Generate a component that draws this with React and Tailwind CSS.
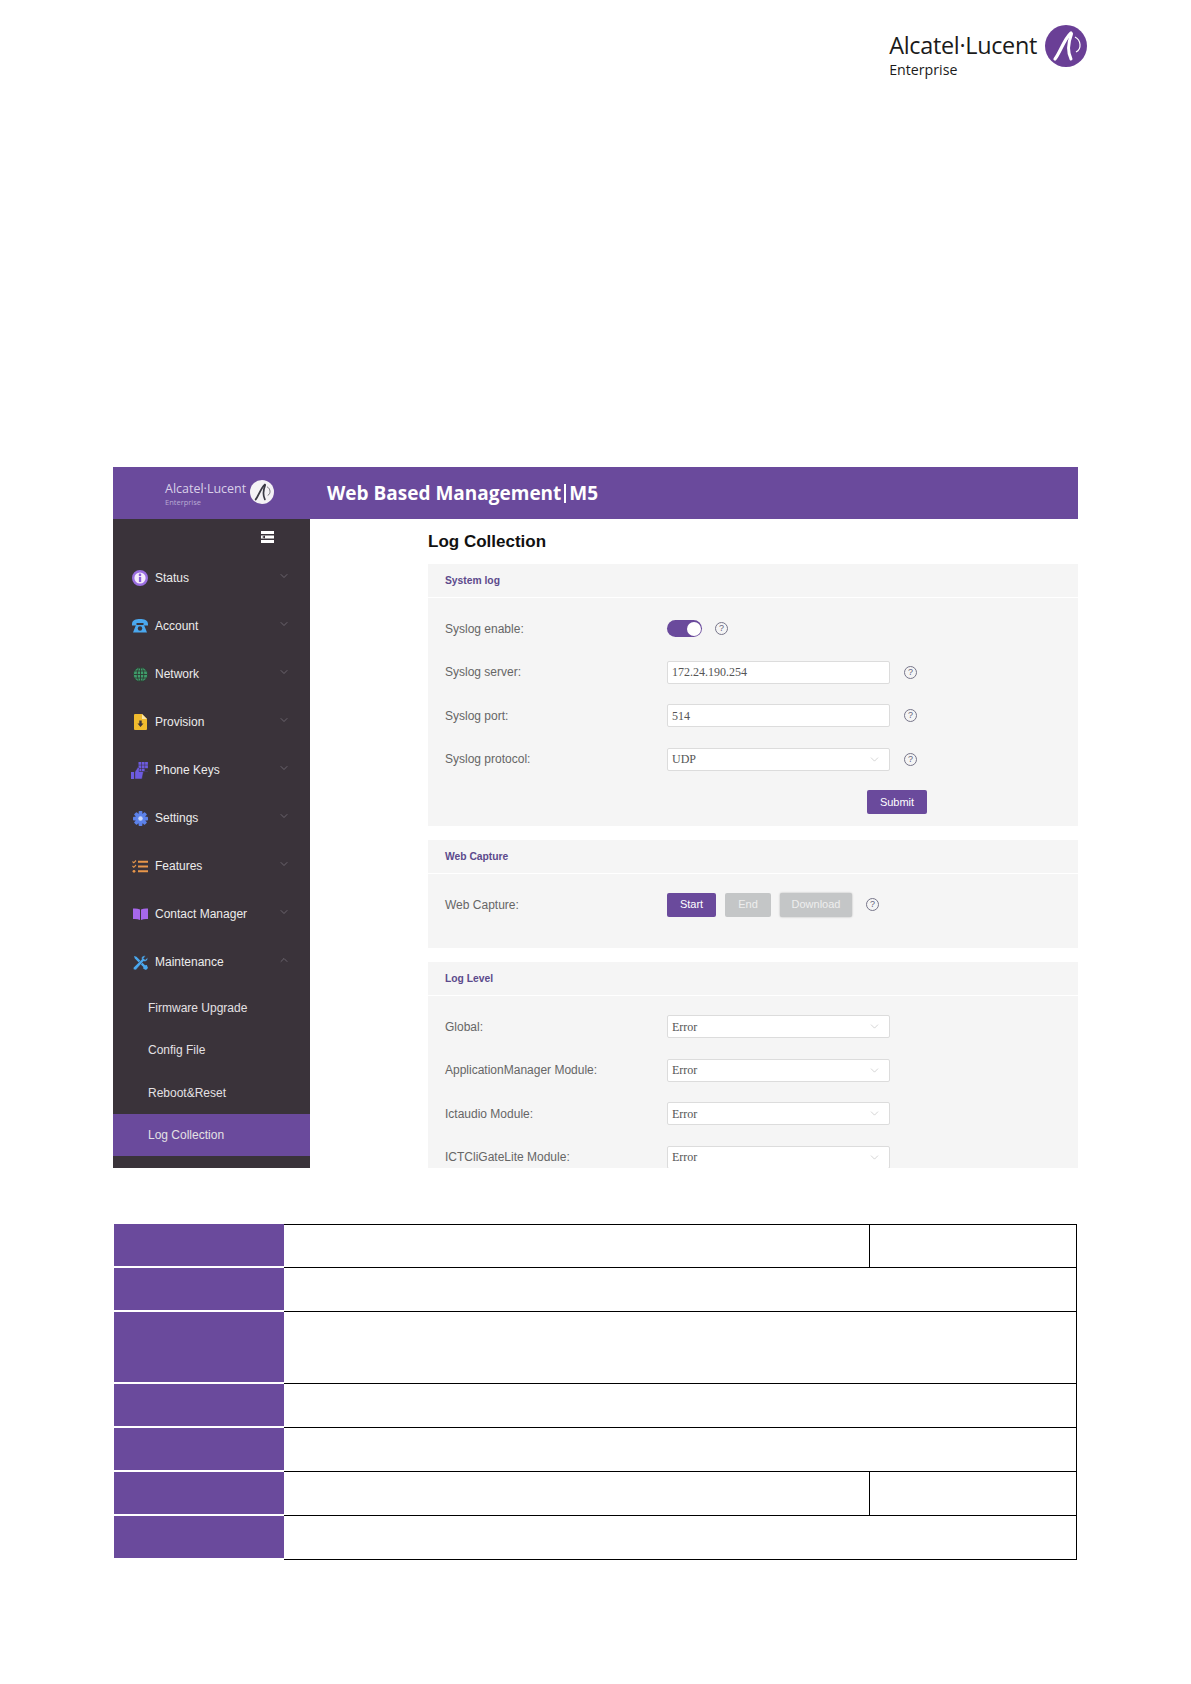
import { ChevronDown, ChevronUp } from 'lucide-react'

const purple = 'bg-[#6a4a9c]'

function AleMark({ size, bg, fg }) {
  return (
    <svg width={size} height={size} viewBox="0 0 42 42" className="shrink-0">
      <circle cx="21" cy="21" r="21" fill={bg} />
      <path d="M10 34 C15 28 19 14 26 8" fill="none" stroke={fg} strokeWidth="3.200" strokeLinecap="round" />
      <path d="M26.500 9 C23.500 17 22.500 27 26 34" fill="none" stroke={fg} strokeWidth="3" strokeLinecap="round" />
      <path d="M30 12 C36 15 37 24 31 27" fill="none" stroke={fg} strokeWidth="1.200" />
    </svg>
  )
}

function MenuIcon() {
  return (
    <svg width="13" height="12" viewBox="0 0 13 12">
      <rect y="0" width="13" height="3" fill="#ffffff" />
      <rect y="4.500" width="13" height="3" fill="#ffffff" />
      <rect y="9" width="13" height="3" fill="#ffffff" />
      <path d="M1 6 L4 4.500 V7.500 Z" fill="#3a333a" />
    </svg>
  )
}

function StatusIcon() {
  return (
    <svg width="16" height="16" viewBox="0 0 16 16">
      <circle cx="8" cy="8" r="6.800" fill="#f3eafc" stroke="#9a6ee0" strokeWidth="2.400" />
      <rect x="6.900" y="7" width="2.300" height="5" fill="#8a5ed8" />
      <circle cx="8" cy="4.900" r="1.300" fill="#8a5ed8" />
    </svg>
  )
}

function AccountIcon() {
  return (
    <svg width="16" height="14" viewBox="0 0 16 14">
      <path d="M0 5 C0 1 4 0 8 0 C12 0 16 1 16 5 L16 6.500 L11.500 6.500 L11.500 4 L4.500 4 L4.500 6.500 L0 6.500 Z" fill="#4aa8ee" />
      <path d="M4 6 L12 6 L15 13.500 L1 13.500 Z" fill="#4aa8ee" />
      <circle cx="8" cy="9.500" r="2.200" fill="#3a333a" />
    </svg>
  )
}

function NetworkIcon() {
  return (
    <svg width="15" height="15" viewBox="0 0 15 15" fill="none" stroke="#2f3a33" strokeWidth="0.900">
      <circle cx="7.500" cy="7.500" r="7.200" fill="#3f9e6c" />
      <ellipse cx="7.500" cy="7.500" rx="3.300" ry="7" />
      <path d="M0.500 7.500 H14.500 M1.500 4 H13.500 M1.500 11 H13.500 M7.500 0.500 V14.500" />
    </svg>
  )
}

function ProvisionIcon() {
  return (
    <svg width="13" height="16" viewBox="0 0 13 16">
      <path d="M0 1 Q0 0 1 0 H8 L13 5 V15 Q13 16 12 16 H1 Q0 16 0 15 Z" fill="#f0bb2e" />
      <path d="M8 0 L13 5 H8 Z" fill="#fbe6a8" />
      <path d="M5.300 6.500 H7.700 V9.500 H9.500 L6.500 13 L3.500 9.500 H5.300 Z" fill="#3a333a" />
    </svg>
  )
}

function KeysIcon() {
  const dots = []
  for (let r = 0; r < 3; r++) {
    for (let c = 0; c < 3; c++) {
      dots.push(<rect key={r + '-' + c} x={7.500 + c * 3.300} y={r * 3.300} width="2.800" height="2.800" fill="#6d5be0" />)
    }
  }
  return (
    <svg width="18" height="17" viewBox="0 0 18 17">
      {dots}
      <rect x="14" y="6.500" width="3" height="3" fill="#3a333a" />
      <path d="M0 10 H3 V17 H0 Z" fill="#6d5be0" />
      <path d="M3.800 10 L7 5 L8.500 6 L8 9.500 H12.500 L11 17 H3.800 Z" fill="#6d5be0" stroke="#3a333a" strokeWidth="0.500" />
    </svg>
  )
}

function GearIcon() {
  const teeth = [0, 45, 90, 135]
  return (
    <svg width="15" height="15" viewBox="0 0 16 16">
      {teeth.map((a) => (
        <rect key={a} x="6" y="0" width="4" height="16" rx="0.800" fill="#5c82ea" transform={`rotate(${a} 8 8)`} />
      ))}
      <circle cx="8" cy="8" r="5.600" fill="#5c82ea" />
      <circle cx="8" cy="8" r="2.400" fill="#c9d6f8" />
    </svg>
  )
}

function FeaturesIcon() {
  return (
    <svg width="16" height="13" viewBox="0 0 16 13" fill="none">
      <path d="M0.500 1.500 L1.800 2.800 L4 0.500 M0.500 6 L1.800 7.300 L4 5" stroke="#e8964a" strokeWidth="1.100" />
      <circle cx="2" cy="11.300" r="1.400" fill="#e8964a" />
      <path d="M6 1.800 H16 M6 6.500 H16 M6 11.200 H16" stroke="#e8964a" strokeWidth="2" />
    </svg>
  )
}

function BookIcon() {
  return (
    <svg width="15" height="12" viewBox="0 0 15 12">
      <path d="M0 0.500 Q4 0 7 1.500 V12 Q4 10.500 0 11 Z" fill="#a768ec" />
      <path d="M15 0.500 Q11 0 8 1.500 V12 Q11 10.500 15 11 Z" fill="#a768ec" />
    </svg>
  )
}

function ToolsIcon() {
  return (
    <svg width="15" height="15" viewBox="0 0 15 15">
      <path d="M1 1 L3.500 1.800 L12 10.300 L13.800 10 L15 13 L13 15 L10.300 13.800 L10.300 12 L1.800 3.500 Z" fill="#4aa8ee" />
      <path d="M14.500 2.500 L12.300 4.700 L10.500 3.500 L12.500 1 C10 0.200 8 2 8.700 4.500 L1 12 C0 13 0 14 1 14.500 C2 15.300 3 15 3.700 14 L10.500 6.300 C13 7 15.200 5 14.500 2.500 Z" fill="#4aa8ee" stroke="#3a333a" strokeWidth="0.500" />
    </svg>
  )
}

function NavRow({ icon, label, open }) {
  const Chevron = open ? ChevronUp : ChevronDown
  return (
    <div className="flex h-12 items-center">
      <div className="flex w-[42px] shrink-0 justify-center pl-[12px]">{icon}</div>
      <span className="flex-1 text-[12px] text-[#ececec]">{label}</span>
      <Chevron size={12} strokeWidth={1.2} className="mr-[20px] mb-[5px] text-[#8a858e]" />
    </div>
  )
}

function SubRow({ label, active }) {
  return (
    <div className={`flex h-[42.500px] items-center pl-[35px] pt-[1px] text-[12px] text-[#e4e1e4] ${active ? purple : ''}`}>
      {label}
    </div>
  )
}

function Help() {
  return (
    <span className="flex h-[13px] w-[13px] shrink-0 items-center justify-center rounded-full border border-[#77758a] text-[9px] leading-none text-[#66647c]">?</span>
  )
}

function Field({ value, select }) {
  return (
    <div className="flex h-[23px] w-[223px] shrink-0 items-center justify-between rounded-[2px] border border-[#dcdcdc] bg-white pl-[4px] pr-[8px] font-['Liberation_Serif',serif] text-[12px] text-[#555555]">
      <span>{value}</span>
      {select && <ChevronDown size={13} strokeWidth={1} className="text-[#b0b0b0]" />}
    </div>
  )
}

function FormRow({ label, children }) {
  return (
    <div className="flex h-[43.500px] items-center">
      <span className="w-[239px] shrink-0 whitespace-nowrap pl-[17px] text-[12px] text-[#666666]">{label}</span>
      {children}
    </div>
  )
}

function SectionHead({ children }) {
  return (
    <div className="flex h-[34px] items-center border-b border-white pl-[17px] pt-[1px] text-[10.300px] font-bold text-[#5c4a8c]">
      {children}
    </div>
  )
}

export default function App() {
  return (
    <div className="h-[1684px] overflow-hidden bg-white font-['Liberation_Sans',Arial,sans-serif]">
      {/* logo top right */}
      <div className="flex h-[467px] items-start justify-end pr-[104px] pt-[25px]">
        <div className="flex items-start gap-[8px]">
          <div className="pt-[5px] font-['Open_Sans',sans-serif] text-[#1a1a1a]">
            <div className="text-[23.400px] font-medium leading-[31px] tracking-[-0.300px]">Alcatel·Lucent</div>
            <div className="text-[14.200px] leading-[18px]">Enterprise</div>
          </div>
          <AleMark size={42} bg="#6a3f96" fg="#ffffff" />
        </div>
      </div>

      {/* embedded web ui */}
      <div className="ml-[113px] h-[701px] w-[965px] overflow-hidden">
        <div className={`flex h-[52px] items-center ${purple}`}>
          <div className="flex w-[214px] shrink-0 items-start pl-[52px] pt-[1px]">
            <div className="pt-[1px] font-['Open_Sans',sans-serif] text-[#d9d0e8]">
              <div className="text-[12.500px] font-medium leading-[16px]">Alcatel·Lucent</div>
              <div className="text-[7.500px] leading-[10px] text-[#b9aad4]">Enterprise</div>
            </div>
            <div className="ml-[4px]"><AleMark size={24} bg="#f4f2f6" fg="#3a3a44" /></div>
          </div>
          <div className="flex items-center whitespace-nowrap font-['Open_Sans',sans-serif] text-[19px] font-bold text-white">
            <span>Web Based Management</span>
            <span className="mx-[3px] h-[19px] w-[2px] bg-white" />
            <span>M5</span>
          </div>
        </div>

        <div className="flex h-[649px]">
          <aside className="w-[197px] shrink-0 bg-[#3a333a]">
            <div className="flex h-[35px] items-center justify-end pr-[36px]">
              <MenuIcon />
            </div>
            <NavRow icon={<StatusIcon />} label="Status" />
            <NavRow icon={<AccountIcon />} label="Account" />
            <NavRow icon={<NetworkIcon />} label="Network" />
            <NavRow icon={<ProvisionIcon />} label="Provision" />
            <NavRow icon={<KeysIcon />} label="Phone Keys" />
            <NavRow icon={<GearIcon />} label="Settings" />
            <NavRow icon={<FeaturesIcon />} label="Features" />
            <NavRow icon={<BookIcon />} label="Contact Manager" />
            <NavRow icon={<ToolsIcon />} label="Maintenance" open />
            <SubRow label="Firmware Upgrade" />
            <SubRow label="Config File" />
            <SubRow label="Reboot&Reset" />
            <SubRow label="Log Collection" active />
          </aside>

          <main className="ml-[118px] flex-1">
            <h1 className="flex h-[45px] items-center text-[17px] font-bold text-[#111111]">Log Collection</h1>

            <section className="h-[262px] bg-[#f5f5f5]">
              <SectionHead>System log</SectionHead>
              <div className="pt-[9px]">
                <FormRow label="Syslog enable:">
                  <div className="flex h-[17px] w-[35px] items-center justify-end rounded-full bg-[#6a4a9c] pr-[1.500px]">
                    <div className="h-[14px] w-[14px] rounded-full bg-white" />
                  </div>
                  <div className="ml-[13px]"><Help /></div>
                </FormRow>
                <FormRow label="Syslog server:">
                  <Field value="172.24.190.254" />
                  <div className="ml-[14px]"><Help /></div>
                </FormRow>
                <FormRow label="Syslog port:">
                  <Field value="514" />
                  <div className="ml-[14px]"><Help /></div>
                </FormRow>
                <FormRow label="Syslog protocol:">
                  <Field value="UDP" select />
                  <div className="ml-[14px]"><Help /></div>
                </FormRow>
                <div className="flex justify-end pr-[151px] pt-[9px]">
                  <button className={`h-[24px] w-[60px] rounded-[2px] text-[11px] text-white ${purple}`}>Submit</button>
                </div>
              </div>
            </section>

            <section className="mt-[14px] h-[108px] bg-[#f5f5f5]">
              <SectionHead>Web Capture</SectionHead>
              <div className="flex h-[61px] items-center">
                <span className="w-[239px] shrink-0 pl-[17px] text-[12px] text-[#666666]">Web Capture:</span>
                <button className={`h-[24px] w-[49px] rounded-[2px] text-[11px] text-white ${purple}`}>Start</button>
                <button className="ml-[9px] h-[24px] w-[46px] rounded-[2px] bg-[#c4c6c7] text-[11px] text-[#eeeeee]">End</button>
                <button className="ml-[9px] h-[24px] w-[72px] rounded-[2px] bg-[#c4c6c7] text-[11px] text-[#eeeeee] shadow-[0_0_2px_#aaaaaa]">Download</button>
                <div className="ml-[14px]"><Help /></div>
              </div>
            </section>

            <section className="mt-[14px] h-[300px] bg-[#f5f5f5]">
              <SectionHead>Log Level</SectionHead>
              <div className="pt-[9px]">
                <FormRow label="Global:"><Field value="Error" select /></FormRow>
                <FormRow label="ApplicationManager Module:"><Field value="Error" select /></FormRow>
                <FormRow label="Ictaudio Module:"><Field value="Error" select /></FormRow>
                <FormRow label="ICTCliGateLite Module:"><Field value="Error" select /></FormRow>
              </div>
            </section>
          </main>
        </div>
      </div>

      {/* table below the screenshot */}
      <div className="ml-[114px] mt-[56px] w-[963px]">
        {[
          { h: 'h-[44px]', split: true },
          { h: 'h-[44px]' },
          { h: 'h-[72px]' },
          { h: 'h-[44px]' },
          { h: 'h-[44px]' },
          { h: 'h-[44px]', split: true },
          { h: 'h-[44px]' },
        ].map((row, i) => (
          <div key={i} className={`flex ${row.h}`}>
            <div className={`w-[170px] shrink-0 border-b-2 border-white ${purple}`} />
            <div className={`flex flex-1 border-b border-r border-black ${i === 0 ? 'border-t' : ''}`}>
              {row.split && <div className="w-[586px] border-r border-black" />}
            </div>
          </div>
        ))}
      </div>
    </div>
  )
}
